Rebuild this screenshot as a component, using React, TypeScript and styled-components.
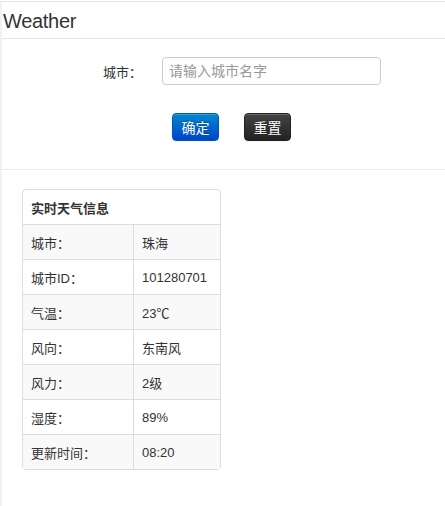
import React from "react";
import styled, { createGlobalStyle } from "styled-components";

const GlobalStyle = createGlobalStyle`
  html, body { margin: 0; padding: 0; background: #fff; }
  body {
    font-family: "Liberation Sans", "Noto Sans CJK SC", sans-serif;
    font-size: 13px;
    color: #333;
  }
`;

const Page = styled.div`
  width: 445px;
  height: 506px;
  box-sizing: border-box;
  border-top: 1px solid #e3e6e8;
  border-left: 2px solid #eef2f5;
  margin-top: 1px;
  overflow: hidden;
`;

const Header = styled.div`
  height: 36px;
  border-bottom: 1px solid #e1e5e8;
  display: flex;
  align-items: center;
  padding-left: 1px;
`;

const Title = styled.h1`
  margin: 0;
  font-weight: normal;
  font-size: 20px;
  letter-spacing: -0.3px;
  color: #333;
  font-family: "Liberation Sans", "Noto Sans CJK SC", sans-serif;
  line-height: 24px;
  padding-top: 1px;
`;

const Form = styled.div`
  height: 130px;
  border-bottom: 1px solid #e8ebee;
  display: flex;
  flex-direction: column;
`;

const FieldRow = styled.div`
  display: flex;
  align-items: center;
  margin-top: 18px;
  height: 28px;
`;

const Label = styled.label`
  width: 58px;
  margin-left: 101px;
  font-size: 13px;
  color: #333;
`;

const Input = styled.input`
  width: 219px;
  height: 28px;
  box-sizing: border-box;
  border: 1px solid #ccc;
  border-radius: 4px;
  padding: 0 6px;
  font-family: "Liberation Sans", "Noto Sans CJK SC", sans-serif;
  font-size: 14px;
  color: #555;
  margin-left: 1px;
  outline: none;
  &::placeholder { color: #999; }
`;

const Buttons = styled.div`
  display: flex;
  gap: 25px;
  margin-top: 28px;
  margin-left: 170px;
`;

const Button = styled.button<{ $variant: "primary" | "inverse" }>`
  width: 47px;
  height: 28px;
  box-sizing: border-box;
  border-radius: 4px;
  font-family: "Liberation Sans", "Noto Sans CJK SC", sans-serif;
  font-size: 14px;
  color: #fff;
  padding: 0;
  cursor: pointer;
  text-shadow: 0 -1px 0 rgba(0, 0, 0, 0.25);
  box-shadow: inset 0 1px 0 rgba(255, 255, 255, 0.2), 0 1px 2px rgba(0, 0, 0, 0.05);
  border: 1px solid
    ${(p) => (p.$variant === "primary" ? "#0055bb" : "#222")};
  background: ${(p) =>
    p.$variant === "primary"
      ? "linear-gradient(to bottom, #0088cc, #0044cc)"
      : "linear-gradient(to bottom, #444444, #222222)"};
`;

const Content = styled.div`
  padding: 19px 0 0 20px;
`;

const Table = styled.table`
  width: 199px;
  border-collapse: separate;
  border-spacing: 0;
  border: 1px solid #ddd;
  border-radius: 4px;
  font-size: 13px;
`;

const HeadCell = styled.th`
  height: 34px;
  box-sizing: border-box;
  text-align: left;
  padding: 0 8px;
  font-weight: bold;
  font-size: 13px;
  color: #333;
`;

const Row = styled.tr<{ $striped: boolean }>`
  background: ${(p) => (p.$striped ? "#f9f9f9" : "transparent")};
`;

const Cell = styled.td<{ $first?: boolean }>`
  height: 35px;
  box-sizing: border-box;
  padding: 0 8px;
  border-top: 1px solid #ddd;
  border-left: ${(p) => (p.$first ? "none" : "1px solid #ddd")};
  color: #333;
  width: ${(p) => (p.$first ? "110px" : "auto")};
`;

const rows: [string, string][] = [
  ["城市：", "珠海"],
  ["城市ID：", "101280701"],
  ["气温：", "23℃"],
  ["风向：", "东南风"],
  ["风力：", "2级"],
  ["湿度：", "89%"],
  ["更新时间：", "08:20"],
];

export default function App() {
  return (
    <>
      <GlobalStyle />
      <Page>
        <Header>
          <Title>Weather</Title>
        </Header>
        <Form>
          <FieldRow>
            <Label>城市：</Label>
            <Input placeholder="请输入城市名字" />
          </FieldRow>
          <Buttons>
            <Button $variant="primary">确定</Button>
            <Button $variant="inverse">重置</Button>
          </Buttons>
        </Form>
        <Content>
          <Table>
            <thead>
              <tr>
                <HeadCell colSpan={2}>实时天气信息</HeadCell>
              </tr>
            </thead>
            <tbody>
              {rows.map(([k, v], i) => (
                <Row key={k} $striped={i % 2 === 0}>
                  <Cell $first>{k}</Cell>
                  <Cell>{v}</Cell>
                </Row>
              ))}
            </tbody>
          </Table>
        </Content>
      </Page>
    </>
  );
}
